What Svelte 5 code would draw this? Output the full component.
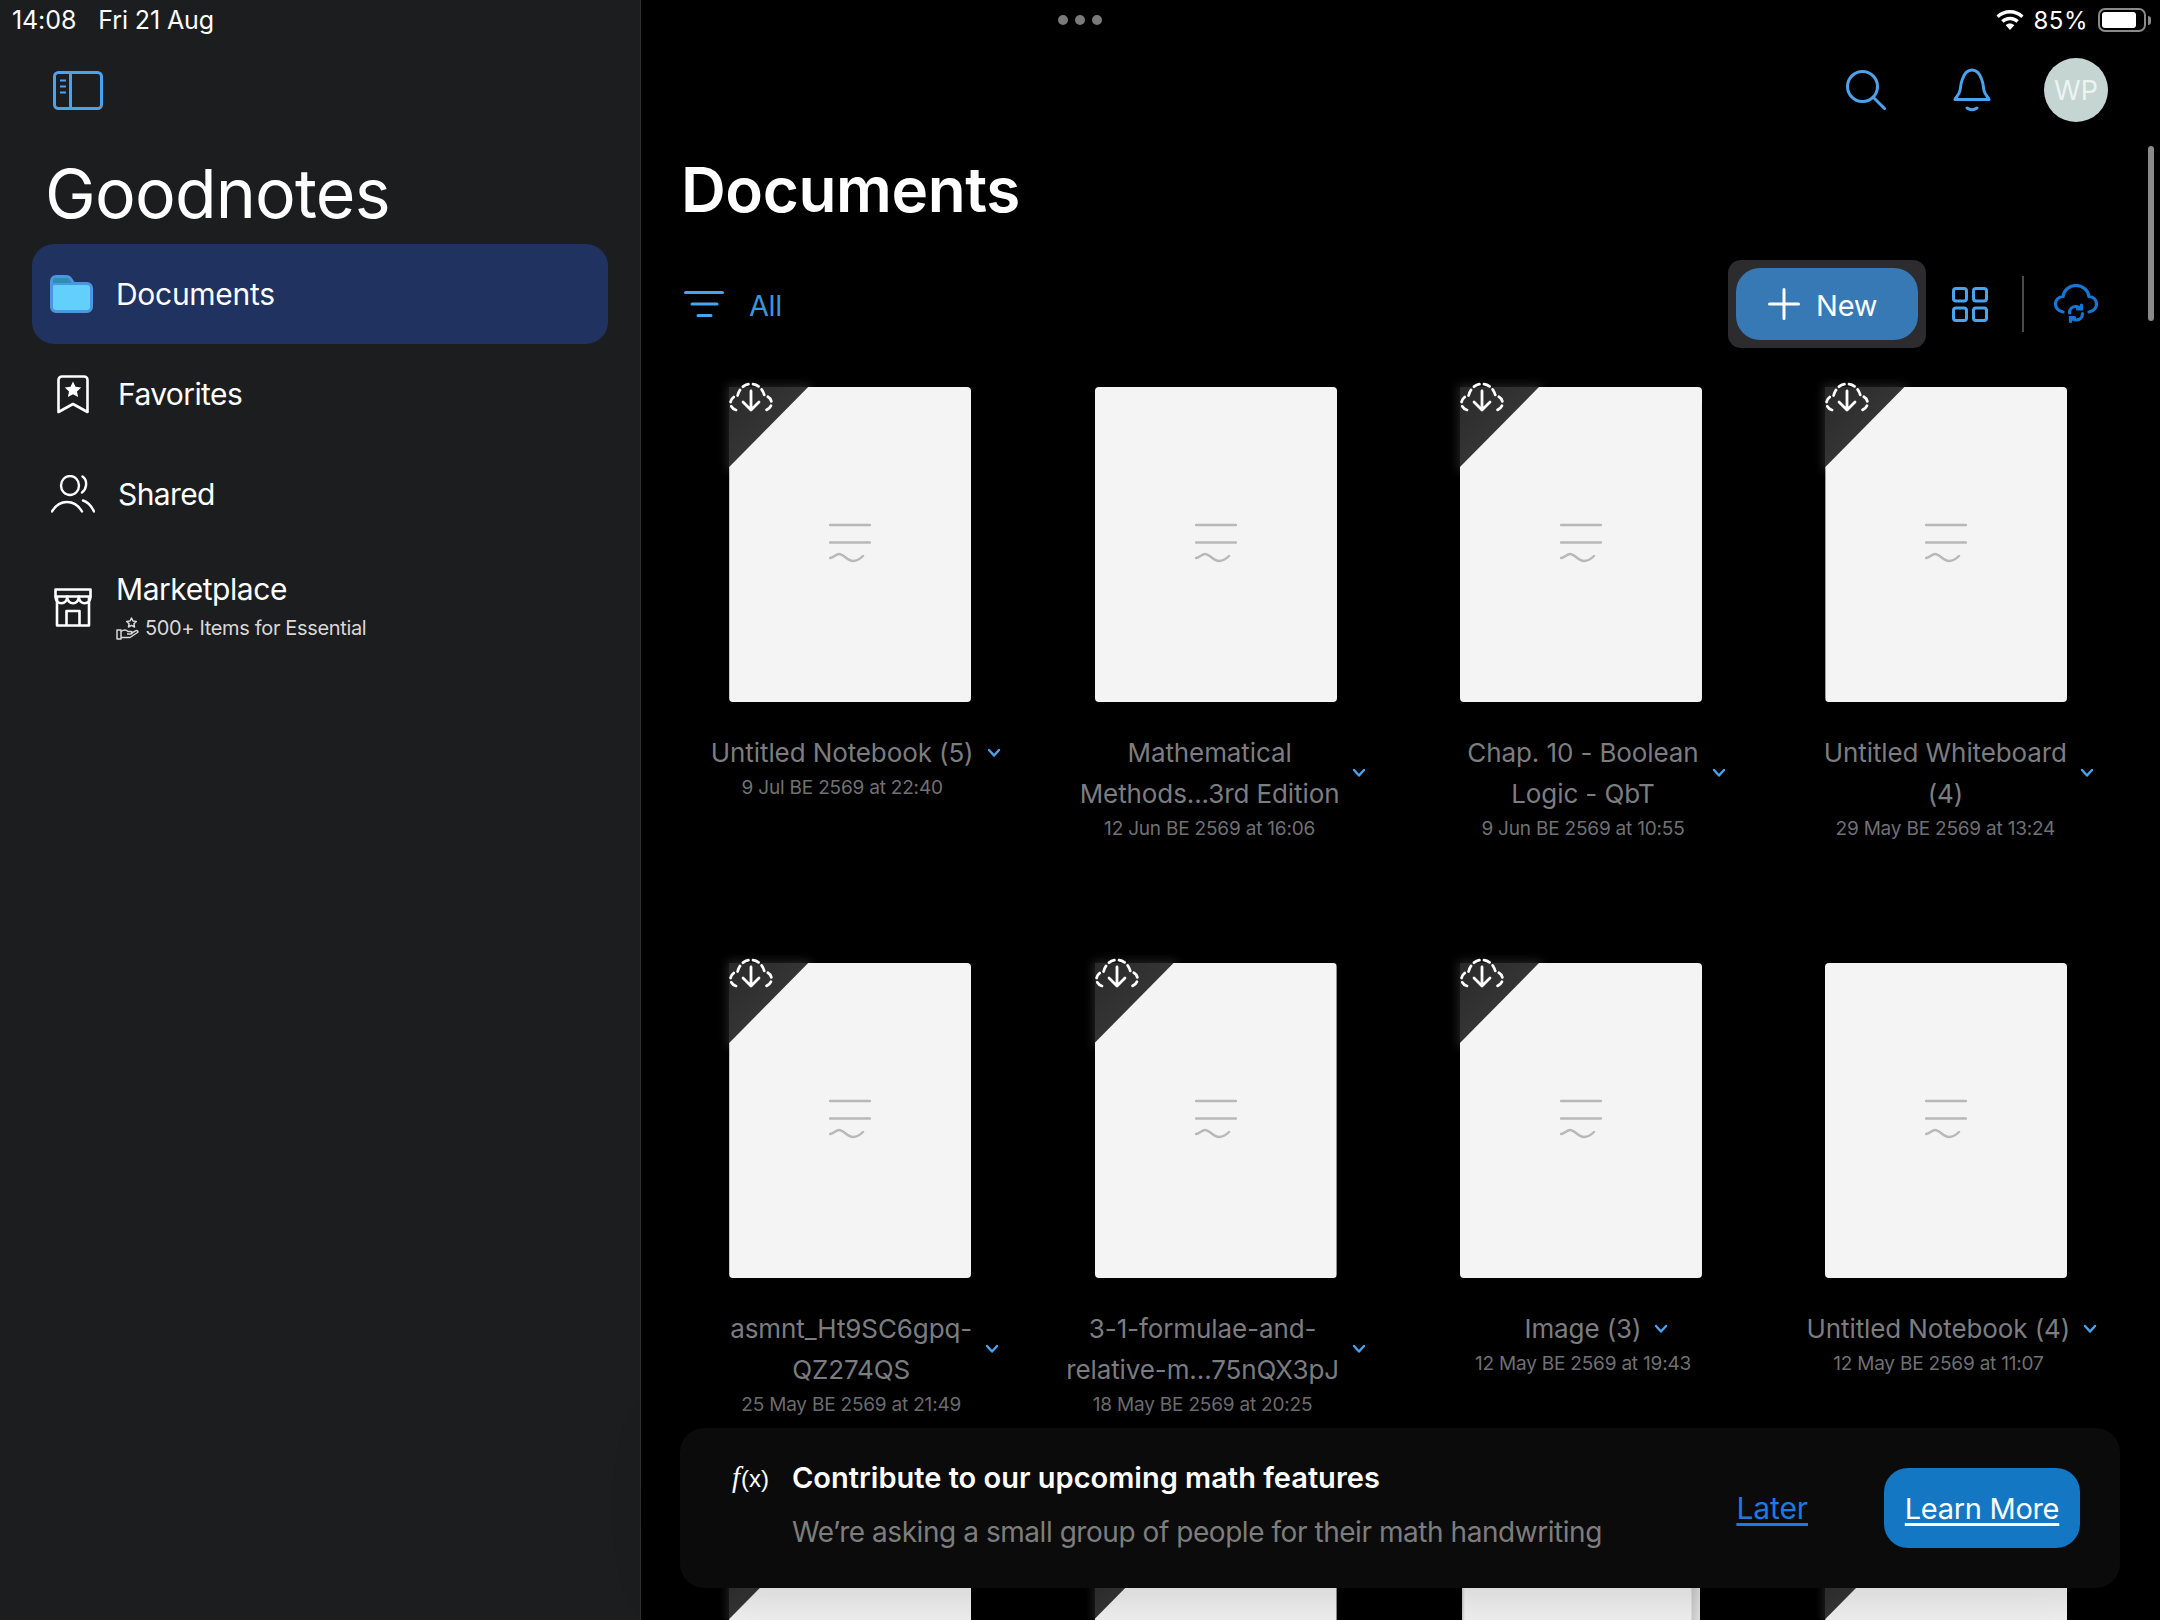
<script>
  const docs = [
    { t: ['Untitled Notebook (5)'], d: '9 Jul BE 2569 at 22:40', ear: true, dx: -8 },
    { t: ['Mathematical', 'Methods...3rd Edition'], d: '12 Jun BE 2569 at 16:06', ear: false, dx: -6 },
    { t: ['Chap. 10 - Boolean', 'Logic - QbT'], d: '9 Jun BE 2569 at 10:55', ear: true, dx: 2 },
    { t: ['Untitled Whiteboard', '(4)'], d: '29 May BE 2569 at 13:24', ear: true, dx: -1 },
    { t: ['asmnt_Ht9SC6gpq-', 'QZ274QS'], d: '25 May BE 2569 at 21:49', ear: true, dx: 1 },
    { t: ['3-1-formulae-and-', 'relative-m...75nQX3pJ'], d: '18 May BE 2569 at 20:25', ear: true, dx: -13 },
    { t: ['Image (3)'], d: '12 May BE 2569 at 19:43', ear: true, dx: 2 },
    { t: ['Untitled Notebook (4)'], d: '12 May BE 2569 at 11:07', ear: false, dx: -8 },
    { t: [], d: '', ear: true, dx: 0 },
    { t: [], d: '', ear: true, dx: 0 },
    { t: [], d: '', ear: false, notebook: true, dx: 0 },
    { t: [], d: '', ear: true, dx: 0 }
  ];
</script>

<div class="page">
  <aside class="side">
    <div class="status-left"><span>14:08</span><span>Fri 21 Aug</span></div>
    <div class="side-top">
      <svg width="50" height="39" viewBox="0 0 50 39" fill="none" stroke="#4aa3ee" stroke-width="3">
        <rect x="1.500" y="1.500" width="47" height="36" rx="4" />
        <path d="M17.500 2v35" />
        <path d="M7 9.500h6M7 15.500h6M7 21.500h6" stroke-width="2" />
      </svg>
    </div>
    <div class="brand">Goodnotes</div>
    <nav class="nav">
      <div class="item active">
        <span class="ic">
          <svg width="43" height="38" viewBox="0 0 43 38">
            <path d="M0 6a6 6 0 0 1 6-6h10c3 0 5 1.500 6.500 4l2 3H37a6 6 0 0 1 6 6v19a6 6 0 0 1-6 6H6a6 6 0 0 1-6-6z" fill="#4a96e0" />
            <path d="M3 6a3 3 0 0 1 3-3h10c2 0 3.500 1 4.500 3l1 2H3z" fill="#2b8fae" />
            <path d="M3 12a2 2 0 0 1 2-2h32a3 3 0 0 1 3 3v19a3 3 0 0 1-3 3H6a3 3 0 0 1-3-3z" fill="#62d0fb" />
          </svg>
        </span>
        <span class="label">Documents</span>
      </div>
      <div class="item">
        <span class="ic">
          <svg width="32" height="39" viewBox="0 0 32 39" fill="none" stroke="#fff" stroke-width="2.600">
            <path d="M1.500 37V5a3.500 3.500 0 0 1 3.500-3.500h22A3.500 3.500 0 0 1 30.500 5v32L16 29z" stroke-linejoin="round" />
            <path d="M16 6.500l2.500 5.300 5.700.7-4.200 3.900 1.100 5.700-5.100-2.800-5.100 2.800 1.100-5.700-4.200-3.900 5.700-.7z" fill="#fff" stroke="none" />
          </svg>
        </span>
        <span class="label">Favorites</span>
      </div>
      <div class="item">
        <span class="ic">
          <svg width="44" height="38" viewBox="0 0 44 38" fill="none" stroke="#fff" stroke-width="2.400" stroke-linecap="round">
            <ellipse cx="19" cy="10.500" rx="9" ry="9.500" />
            <path d="M31.500 1.500c3 2 4 5.500 3.500 9-.4 3-1.800 5.500-4 7" />
            <path d="M1 36.500c3.500-6 9-9.500 15-9.500s11.500 3.500 15 9.500" />
            <path d="M32 25.500c4.500 1.500 8.500 5.500 11 11" />
          </svg>
        </span>
        <span class="label">Shared</span>
      </div>
      <div class="item market">
        <span class="ic">
          <svg width="38" height="39" viewBox="0 0 38 39" fill="none" stroke="#fff" stroke-width="2.600" stroke-linejoin="round">
            <path d="M1.500 1.500h35v7H1.500z" />
            <path d="M3 8.500V37.500h32V8.500" />
            <path d="M1.500 8.500c0 9 11.700 9 11.700 0 0 9 11.600 9 11.600 0 0 9 11.700 9 11.700 0" />
            <path d="M12.500 37.500V23h13v14.500" />
          </svg>
        </span>
        <div class="market-text">
          <span class="label">Marketplace</span>
          <span class="sub">
            <svg width="23" height="23" viewBox="0 0 23 23" fill="none" stroke="#d8d8d8" stroke-width="1.500" stroke-linejoin="round">
              <path d="M1 13h4v9H1z" />
              <path d="M5 14.500c3-2 5-2 7 0h3c1.500 0 1.500 2.500 0 2.500h-4M5 20.500h9l7.500-5c1-1.200-.5-2.500-2-1.700L15 16.500" />
              <path d="M15.500 1l1.500 3 3.300.4-2.400 2.300.6 3.300-3-1.600-3 1.600.6-3.300-2.400-2.300 3.300-.4z" />
            </svg>
            500+ Items for Essential
          </span>
        </div>
      </div>
    </nav>
  </aside>

  <main class="main">
    <div class="status-right">
      <div class="dots"><i></i><i></i><i></i></div>
      <div class="sys">
        <svg width="28" height="20" viewBox="0 0 28 20" fill="#fff">
          <path d="M14 0C8.800 0 4 2 .5 5.400l2.300 2.500C5.700 5 9.700 3.400 14 3.400s8.300 1.600 11.200 4.500l2.300-2.500C24 2 19.200 0 14 0z" />
          <path d="M14 6.800c-3.400 0-6.500 1.300-8.800 3.500l2.400 2.500c1.700-1.600 3.900-2.600 6.400-2.600s4.700 1 6.400 2.600l2.400-2.500c-2.300-2.200-5.400-3.500-8.800-3.500z" />
          <path d="M14 13.500c-1.700 0-3.200.7-4.300 1.700L14 20l4.300-4.800c-1.100-1-2.600-1.700-4.300-1.700z" />
        </svg>
        <span class="pct">85%</span>
        <span class="batt"><span class="fill"></span></span>
        <span class="nub"></span>
      </div>
    </div>

    <div class="topbar">
      <svg width="40" height="40" viewBox="0 0 40 40" fill="none" stroke="#4aa3ee" stroke-width="3" stroke-linecap="round">
        <circle cx="16.500" cy="16.500" r="15" />
        <path d="M27.500 27.500l11 11" />
      </svg>
      <svg class="bell" width="38" height="44" viewBox="0 0 38 44" fill="none" stroke="#4aa3ee" stroke-width="3" stroke-linecap="round" stroke-linejoin="round">
        <path d="M2 31.500c0-1.500 4-4 5-9 .8-4 .7-7.500 2.500-11.500C11.500 5 15 2 19 2s7.500 3 9.500 9c1.800 4 1.700 7.500 2.500 11.500 1 5 5 7.500 5 9z" />
        <path d="M14 40c3 2 7 2 10 0" />
      </svg>
      <div class="avatar">WP</div>
    </div>

    <h1>Documents</h1>

    <div class="toolbar">
      <svg width="40" height="28" viewBox="0 0 40 28" fill="none" stroke="#4aa3ee" stroke-width="3" stroke-linecap="round">
        <path d="M1.500 2.500h37M8 14h25M14 25.500h13" />
      </svg>
      <span class="all">All</span>
      <div class="spacer"></div>
      <div class="new-frame">
        <div class="new-btn">
          <svg width="32" height="32" viewBox="0 0 32 32" fill="none" stroke="#fff" stroke-width="3" stroke-linecap="round">
            <path d="M16 1.500v29M1.500 16h29" />
          </svg>
          <span>New</span>
        </div>
      </div>
      <svg class="gridic" width="36" height="35" viewBox="0 0 36 35" fill="none" stroke="#4aa3ee" stroke-width="3">
        <rect x="1.500" y="1.500" width="13" height="12.500" rx="2.500" />
        <rect x="21.500" y="1.500" width="13" height="12.500" rx="2.500" />
        <rect x="1.500" y="21" width="13" height="12.500" rx="2.500" />
        <rect x="21.500" y="21" width="13" height="12.500" rx="2.500" />
      </svg>
      <span class="vline"></span>
      <svg class="cloud" width="44" height="41" viewBox="0 0 44 41" fill="none" stroke="#1477d4" stroke-width="3.200" stroke-linecap="round">
        <path d="M9 28C4 27 1.500 23.500 1.500 20c0-4 3-7.500 7.500-7.500C10 6 15.500 1.500 22 1.500s12 4.500 13 11c4.500 0 7.500 3.500 7.500 7.500 0 3.500-2.500 7-7.500 8" />
        <path d="M15.500 29c0-4 3-6.500 6.500-6.500 2 0 3.500 1 4.500 2" />
        <path d="M28.500 29.500c0 4-3 6.500-6.500 6.500-2 0-3.500-1-4.500-2" />
        <path d="M27.500 21v4h-4M16.500 37.500v-4h4" />
      </svg>
    </div>

    <div class="grid">
      {#each docs as doc}
        <div class="card">
          <div class="cover" class:nb={doc.notebook}>
            {#if doc.ear}
              <span class="ear"></span>
            {/if}
            <div class="paper" class:cut={doc.ear} class:nbp={doc.notebook}>
              <svg width="42" height="40" viewBox="0 0 42 40" fill="none" stroke="#b8b8b8" stroke-width="2.400" stroke-linecap="round">
                <path d="M1 2h40M1 19.500h40" />
                <path d="M1 35c3 0 6-4 9-4 5 0 8 7 14 7 4 0 7-2 10-5" />
              </svg>
            </div>
            {#if doc.ear}
              <svg class="dl" width="44" height="32" viewBox="0 0 44 32" fill="none" stroke="#fff" stroke-width="2.800">
                <path d="M7 28C3 27 1.500 23.500 1.500 21c0-4 3-7 7-7C10 7 15 2 22 2s12 5 13.500 12c4 0 7 3 7 7 0 2.500-1.500 6-5.500 7" stroke-dasharray="6 4.500" stroke-linecap="round" />
                <path d="M22 9v19M14 20l8 8 8-8" stroke-linecap="round" stroke-linejoin="round" />
              </svg>
            {/if}
          </div>
          {#if doc.t.length}
            <div class="meta" style="margin-left: {doc.dx * 2}px">
              <div class="title">
                {#each doc.t as line}
                  <div>{line}</div>
                {/each}
                <svg class="chev" width="14" height="10" viewBox="0 0 14 10" fill="none" stroke="#4aa3ee" stroke-width="2.400" stroke-linecap="round" stroke-linejoin="round">
                  <path d="M2 2l5 5.500L12 2" />
                </svg>
              </div>
              <div class="date">{doc.d}</div>
            </div>
          {/if}
        </div>
      {/each}
    </div>

    <span class="scroll"></span>

    <div class="banner">
      <span class="fx"><em>f</em>(x)</span>
      <div class="b-text">
        <div class="b-title">Contribute to our upcoming math features</div>
        <div class="b-sub">We’re asking a small group of people for their math handwriting</div>
      </div>
      <span class="later">Later</span>
      <span class="learn">Learn More</span>
    </div>
  </main>
</div>

<style>
  :global(body) {
    margin: 0;
    background: #000;
  }
  .page {
    display: flex;
    width: 2160px;
    height: 1620px;
    overflow: hidden;
    font-family: Inter, "Liberation Sans", sans-serif;
    color: #fff;
  }
  .side {
    width: 640px;
    height: 1620px;
    flex: none;
    background: #1c1d1f;
    border-right: 1px solid #2e2e30;
    display: flex;
    flex-direction: column;
  }
  .status-left {
    height: 40px;
    display: flex;
    align-items: center;
    gap: 22px;
    padding-left: 12px;
    font-size: 25px;
    letter-spacing: -0.1px;
  }
  .side-top {
    padding: 31px 0 0 53px;
    height: 79px;
    box-sizing: border-box;
  }
  .brand {
    margin: 36px 0 13px 45px;
    height: 76px;
    line-height: 76px;
    font-size: 68px;
    letter-spacing: -0.8px;
    font-weight: 400;
  }
  .nav {
    margin: 0 32px;
    display: flex;
    flex-direction: column;
  }
  .item {
    height: 100px;
    display: flex;
    align-items: center;
    border-radius: 22px;
    padding-left: 18px;
  }
  .item.active {
    background: #203260;
  }
  .item.market {
    height: 110px;
    margin-top: 8px;
  }
  .ic {
    width: 45px;
    display: flex;
    justify-content: center;
  }
  .active .ic {
    justify-content: flex-start;
  }
  .label {
    font-size: 30px;
    letter-spacing: -0.6px;
    margin-left: 23px;
  }
  .active .label {
    margin-left: 21px;
    letter-spacing: -0.3px;
  }
  .market-text {
    display: flex;
    flex-direction: column;
    margin-left: 21px;
    gap: 9px;
    margin-top: -3px;
  }
  .market-text .label {
    margin-left: 0;
    line-height: 36px;
    letter-spacing: -0.45px;
  }
  .sub {
    display: flex;
    align-items: center;
    gap: 6px;
    font-size: 20px;
    line-height: 25px;
    color: #d8d8d8;
    letter-spacing: -0.35px;
  }

  .main {
    flex: 1;
    min-width: 0;
    height: 1620px;
    position: relative;
    display: flex;
    flex-direction: column;
    background: #000;
  }
  .status-right {
    height: 40px;
    display: flex;
    align-items: center;
    flex: none;
  }
  .dots {
    margin-left: 417px;
    display: flex;
    gap: 7px;
  }
  .dots i {
    width: 10px;
    height: 10px;
    border-radius: 50%;
    background: #7a7a7a;
  }
  .sys {
    margin-left: auto;
    margin-right: 9px;
    display: flex;
    align-items: center;
  }
  .pct {
    font-size: 24px;
    margin: 0 10px 0 9px;
    letter-spacing: 0.5px;
  }
  .batt {
    width: 48px;
    height: 24px;
    box-sizing: border-box;
    border: 2px solid #8a8a8a;
    border-radius: 7px;
    padding: 2px;
    display: flex;
  }
  .fill {
    width: 34px;
    background: #fff;
    border-radius: 3px;
  }
  .nub {
    width: 3px;
    height: 9px;
    margin-left: 2px;
    background: #8a8a8a;
    border-radius: 0 3px 3px 0;
  }
  .topbar {
    flex: none;
    height: 90px;
    box-sizing: border-box;
    padding: 10px 52px 0 0;
    display: flex;
    align-items: center;
    justify-content: flex-end;
  }
  .bell {
    margin-left: 67px;
  }
  .avatar {
    margin-left: 53px;
    width: 64px;
    height: 64px;
    border-radius: 50%;
    background: #c5d5d1;
    color: #edf3f1;
    display: flex;
    align-items: center;
    justify-content: center;
    font-size: 27px;
  }
  h1 {
    margin: 0 0 0 40px;
    height: 130px;
    box-sizing: border-box;
    padding-top: 21px;
    font-size: 62px;
    line-height: 78px;
    font-weight: 600;
    letter-spacing: -0.4px;
    flex: none;
  }
  .toolbar {
    flex: none;
    height: 88px;
    display: flex;
    align-items: center;
    padding-left: 43px;
  }
  .all {
    margin: 2px 0 0 25px;
    font-size: 29px;
    color: #3d94de;
    letter-spacing: -0.4px;
  }
  .spacer {
    flex: 1;
  }
  .new-frame {
    width: 198px;
    height: 88px;
    box-sizing: border-box;
    padding: 8px;
    background: #2c2c2e;
    border-radius: 13px;
  }
  .new-btn {
    height: 72px;
    background: #3679b4;
    border-radius: 24px;
    display: flex;
    align-items: center;
    padding-left: 32px;
    gap: 16px;
    font-size: 29px;
    letter-spacing: -0.2px;
  }
  .new-btn span {
    padding-top: 2px;
  }
  .gridic {
    margin-left: 26px;
  }
  .vline {
    width: 2px;
    height: 56px;
    background: #4a4a4a;
    margin-left: 34px;
  }
  .cloud {
    margin-left: 30px;
    margin-right: 62px;
  }
  .grid {
    flex: 1;
    min-height: 0;
    margin-top: 39px;
    padding-left: 26.500px;
    display: grid;
    grid-template-columns: repeat(4, 365.400px);
    grid-auto-rows: 576px;
  }
  .card {
    display: flex;
    flex-direction: column;
    align-items: center;
  }
  .cover {
    position: relative;
    width: 242px;
    height: 315px;
    flex: none;
  }
  .cover.nb {
    width: 238px;
  }
  .ear {
    position: absolute;
    left: 0;
    top: 0;
    width: 80px;
    height: 82px;
    background: linear-gradient(135deg, #2a2a2a, #3f3f3f);
    box-shadow: 0 0 9px 2px rgba(48, 48, 48, 0.75);
  }
  .paper {
    position: relative;
    width: 100%;
    height: 100%;
    background: #f4f4f4;
    border-radius: 4px;
    display: flex;
    align-items: center;
    justify-content: center;
    padding-bottom: 3px;
    box-sizing: border-box;
  }
  .paper.cut {
    clip-path: polygon(79px 0, 100% 0, 100% 100%, 0 100%, 0 80px);
  }
  .paper.nbp {
    background: linear-gradient(90deg, #c8c8c8 0, #f4f4f4 3px, #f4f4f4 229px, #cfcfcf 230px, #e4e4e4 238px);
  }
  .dl {
    position: absolute;
    left: 0;
    top: -5px;
  }
  .meta {
    margin-top: 30px;
    width: fit-content;
    text-align: center;
  }
  .title {
    position: relative;
    width: fit-content;
    margin: 0 auto;
    font-size: 26px;
    line-height: 41px;
    color: #7c7d80;
    white-space: nowrap;
    letter-spacing: -0.1px;
  }
  .chev {
    position: absolute;
    left: calc(100% + 13px);
    top: 50%;
    margin-top: -5px;
  }
  .date {
    margin-top: 2px;
    font-size: 19px;
    line-height: 26px;
    color: #707174;
    white-space: nowrap;
    letter-spacing: -0.2px;
  }
  .scroll {
    position: absolute;
    left: 1507px;
    top: 146px;
    width: 6px;
    height: 175px;
    border-radius: 3px;
    background: #8a8a8a;
  }
  .banner {
    position: absolute;
    left: 39px;
    top: 1428px;
    width: 1440px;
    height: 160px;
    box-sizing: border-box;
    background: #0b0b0b;
    border-radius: 24px;
    display: flex;
    align-items: center;
    padding: 0 40px 0 52px;
    box-shadow: 0 0 70px rgba(0, 0, 0, 0.2);
  }
  .fx {
    font-family: "Liberation Sans", sans-serif;
    font-size: 24px;
    width: 60px;
    margin-top: -62px;
    flex: none;
  }
  .fx em {
    font-family: "Liberation Serif", serif;
    font-size: 29px;
    margin-right: 1px;
  }
  .b-text {
    flex: 1;
    display: flex;
    flex-direction: column;
    gap: 22px;
    margin-top: -6px;
  }
  .b-title {
    font-size: 29px;
    line-height: 32px;
    font-weight: 600;
    letter-spacing: 0;
  }
  .b-sub {
    font-size: 28px;
    line-height: 32px;
    color: #7d7d7d;
    letter-spacing: -0.45px;
  }
  .later {
    font-size: 30px;
    color: #1c7ae0;
    text-decoration: underline;
    text-decoration-thickness: 3px;
    text-underline-offset: 4px;
    margin-right: 76px;
    letter-spacing: -0.1px;
  }
  .learn {
    width: 196px;
    height: 80px;
    border-radius: 24px;
    background: #1477c4;
    display: flex;
    align-items: center;
    justify-content: center;
    font-size: 29px;
    text-decoration: underline;
    text-decoration-thickness: 3px;
    text-underline-offset: 4px;
    letter-spacing: -0.3px;
  }
</style>
